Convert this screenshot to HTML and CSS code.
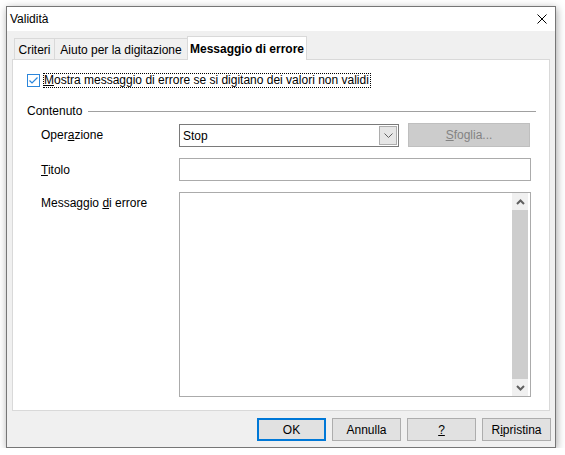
FILE: index.html
```html
<!DOCTYPE html>
<html lang="it">
<head>
<meta charset="utf-8">
<title>Validità</title>
<link rel="stylesheet" href="styles.css">
</head>
<body>
<div class="dialog">
  <div class="titlebar">
    <span class="title">Validità</span>
    <svg class="close" width="10" height="10" viewBox="0 0 10 10"><path d="M0.5 0.5L9.5 9.5M9.5 0.5L0.5 9.5" stroke="#000" stroke-width="1" fill="none"/></svg>
  </div>
  <div class="body">
    <div class="tabs">
      <div class="tab tab-criteri">Criteri</div>
      <div class="tab tab-aiuto">Aiuto per la digitazione</div>
      <div class="tab tab-active">Messaggio di errore</div>
    </div>
    <div class="panel">
      <div class="checkrow">
        <span class="checkbox"><svg width="13" height="13" viewBox="0 0 13 13"><rect x="0.5" y="0.5" width="12" height="12" fill="#fff" stroke="#2b86db"/><path d="M2.5 6.5L5 9L10.5 3.5" stroke="#2b86db" stroke-width="1.2" fill="none"/></svg></span>
        <span class="focus"><u>M</u>ostra messaggio di errore se si digitano dei valori non validi</span>
      </div>
      <div class="section"><span>Contenuto</span><span class="rule"></span></div>
      <div class="form">
        <span class="label">Oper<u>a</u>zione</span>
        <div class="ctrl-row">
          <div class="combo"><span>Stop</span><span class="drop"><svg width="9" height="5" viewBox="0 0 9 5"><path d="M0.5 0.5L4.5 4.5L8.5 0.5" stroke="#606060" stroke-width="1" fill="none"/></svg></span></div>
          <div class="browse"><u>S</u>foglia...</div>
        </div>
        <span class="label"><u>T</u>itolo</span>
        <div class="input"></div>
        <span class="label label-top">Messaggio <u>d</u>i errore</span>
        <div class="textarea">
          <div class="scrollbar">
            <div class="arrow"><svg width="9" height="6" viewBox="0 0 9 6"><path d="M1 5L4.5 1.5L8 5" stroke="#606060" stroke-width="2" fill="none"/></svg></div>
            <div class="thumb"></div>
            <div class="arrow"><svg width="9" height="6" viewBox="0 0 9 6"><path d="M1 1L4.5 4.5L8 1" stroke="#606060" stroke-width="2" fill="none"/></svg></div>
          </div>
        </div>
      </div>
    </div>
    <div class="buttons">
      <div class="btn btn-default">OK</div>
      <div class="btn">Annulla</div>
      <div class="btn"><u>?</u></div>
      <div class="btn">R<u>i</u>pristina</div>
    </div>
  </div>
</div>
</body>
</html>
```
FILE: styles.css
```css
* { box-sizing: border-box; }
body {
  margin: 0;
  background: #ffffff;
  font-family: "Liberation Sans", Arial, sans-serif;
  font-size: 12px;
  color: #000;
}
u { text-decoration: underline; text-underline-offset: 1px; }
.dialog {
  margin: 6px 0 0 6px;
  width: 550px;
  height: 442px;
  border: 1px solid #767676;
  background: #f0f0f0;
  box-shadow: 1px 2px 8px rgba(0,0,0,0.35);
  display: flex;
  flex-direction: column;
}
.titlebar {
  height: 24px;
  background: #fff;
  display: flex;
  align-items: center;
  justify-content: space-between;
  padding: 0 8px 0 3px;
}
.title { line-height: 14px; }
.close { display: block; }
.body {
  flex: 1;
  display: flex;
  flex-direction: column;
  padding: 5px 5px 6px 5px;
}
.tabs {
  height: 23px;
  display: flex;
  align-items: flex-end;
  padding-left: 2px;
}
.tab {
  height: 21px;
  border: 1px solid #d9d9d9;
  border-bottom: none;
  background: #f0f0f0;
  margin-right: -1px;
  display: flex;
  align-items: center;
  justify-content: center;
  padding-top: 1px;
  white-space: nowrap;
}
.tab-criteri { width: 41px; }
.tab-aiuto { width: 134px; }
.tab-active {
  width: 120px;
  height: 24px;
  margin-bottom: -1px;
  background: #fff;
  font-weight: bold;
  position: relative;
  z-index: 1;
}
.panel {
  height: 352px;
  background: #fff;
  border: 1px solid #d9d9d9;
}
.checkrow {
  margin: 13px 0 0 14px;
  height: 15px;
  display: flex;
  align-items: center;
}
.checkbox { width: 13px; height: 13px; }
.checkbox svg { display: block; }
.focus {
  margin-left: 3px;
  border: 1px dotted #000;
  padding: 0 1px 0 0;
  height: 15px;
  line-height: 13px;
  white-space: nowrap;
}
.section {
  margin: 15px 13px 0 14px;
  height: 16px;
  display: flex;
  align-items: center;
}
.rule {
  flex: 1;
  height: 1px;
  background: #a0a0a0;
  margin-left: 6px;
}
.form {
  margin-top: 4px;
  padding-left: 28px;
  display: grid;
  grid-template-columns: 138px 352px;
  row-gap: 11px;
}
.label { align-self: center; line-height: 14px; }
.label-top { align-self: start; padding-top: 4px; }
.ctrl-row {
  display: flex;
  align-items: flex-end;
  gap: 9px;
  height: 24px;
}
.combo {
  width: 220px;
  height: 23px;
  border: 1px solid #7a7a7a;
  display: flex;
  align-items: center;
  padding-left: 3px;
}
.drop {
  margin-left: auto;
  margin-right: 1px;
  width: 18px;
  height: 19px;
  background: #e6e6e6;
  border: 1px solid #adadad;
  display: flex;
  align-items: center;
  justify-content: center;
}
.drop svg { display: block; }
.browse {
  width: 122px;
  height: 24px;
  background: #cccccc;
  border: 1px solid #bfbfbf;
  color: #838383;
  display: flex;
  align-items: center;
  justify-content: center;
}
.input {
  height: 23px;
  border: 1px solid #ababab;
}
.textarea {
  height: 205px;
  border: 1px solid #ababab;
  display: flex;
  justify-content: flex-end;
  padding-right: 2px;
}
.scrollbar {
  width: 16px;
  display: flex;
  flex-direction: column;
  background: #f0f0f0;
}
.arrow {
  height: 17px;
  display: flex;
  align-items: center;
  justify-content: center;
}
.arrow svg { display: block; }
.thumb { flex: 1; background: #cdcdcd; }
.buttons {
  margin-top: 7px;
  display: flex;
  justify-content: flex-end;
  gap: 6px;
  margin-right: -1px;
}
.btn {
  width: 69px;
  height: 23px;
  background: #e1e1e1;
  border: 1px solid #adadad;
  display: flex;
  align-items: center;
  justify-content: center;
}
.btn-default { border: 2px solid #0078d7; }
```
